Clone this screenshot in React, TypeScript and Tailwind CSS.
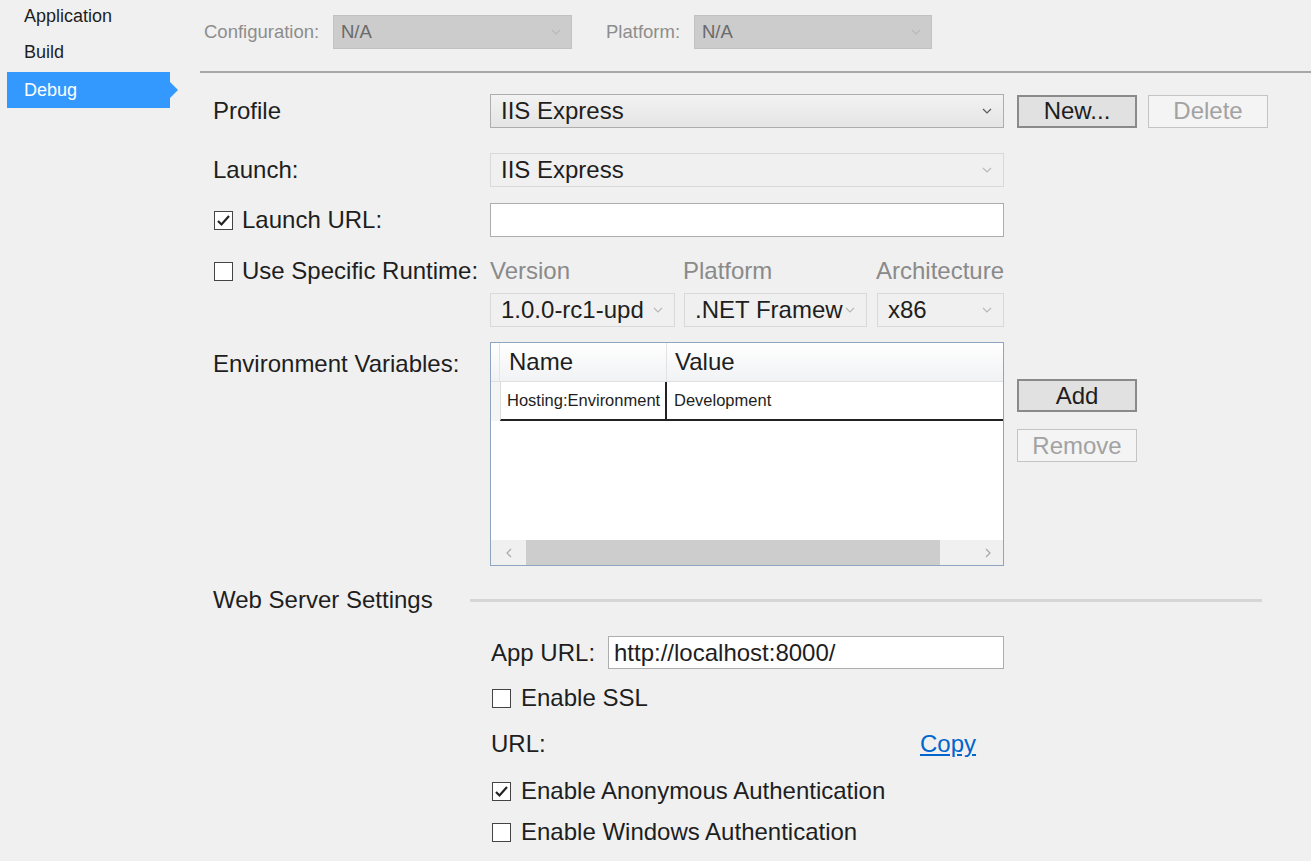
import React from "react";

const font = { fontFamily: '"Liberation Sans", Arial, sans-serif' };

function Chevron({ light }: { light?: boolean }) {
  return (
    <svg width="10" height="6" viewBox="0 0 10 6" className="shrink-0">
      <polyline
        points="1,1 5,5 9,1"
        fill="none"
        stroke={light ? "#b9b9b9" : "#5a5a5a"}
        strokeWidth="1.2"
      />
    </svg>
  );
}

function CheckBox({ checked }: { checked?: boolean }) {
  return (
    <div className="w-[19px] h-[19px] border border-[#444] bg-white flex items-center justify-center shrink-0">
      {checked && (
        <svg width="15" height="13" viewBox="0 0 15 13">
          <path d="M2 7 L5.5 10.5 L13 2" fill="none" stroke="#222" strokeWidth="2.2" />
        </svg>
      )}
    </div>
  );
}

function Select({
  value,
  width,
  disabled,
}: {
  value: string;
  width: string;
  disabled?: boolean;
}) {
  return (
    <div
      className={`${width} h-[34px] flex items-center justify-between pl-[10px] pr-[11px] border ${
        disabled
          ? "bg-[#f0f0f0] border-[#d9d9d9]"
          : "bg-gradient-to-b from-[#f2f2f2] to-[#e5e5e5] border-[#adadad]"
      }`}
    >
      <span className="text-[#1e1e1e] whitespace-nowrap overflow-hidden">{value}</span>
      <Chevron light={disabled} />
    </div>
  );
}

function Button({ label, disabled }: { label: string; disabled?: boolean }) {
  return (
    <div
      className={`w-[120px] h-[33px] flex items-center justify-center ${
        disabled
          ? "border border-[#c4c4c4] bg-[#f4f4f4] text-[#a2a2a2]"
          : "border-2 border-[#8a8a8a] bg-[#e1e1e1] text-[#1e1e1e]"
      }`}
    >
      {label}
    </div>
  );
}

function Sidebar() {
  return (
    <aside className="w-[200px] shrink-0 text-[18px] text-[#1e1e1e]">
      <div className="h-[32px] flex items-center pl-[24px]">Application</div>
      <div className="h-[40px] flex items-center pl-[24px]">Build</div>
      <div
        className="ml-[7px] w-[171px] h-[36px] flex items-center pl-[17px] bg-[#3399ff] text-white"
        style={{
          clipPath:
            "polygon(0 0, 163px 0, 163px 10px, 171px 18px, 163px 26px, 163px 36px, 0 36px)",
        }}
      >
        Debug
      </div>
    </aside>
  );
}

function Toolbar() {
  return (
    <div className="h-[73px] border-b-2 border-[#a7a7a7] flex items-start pt-[15px] text-[18.5px] text-[#8d8d8d]">
      <span className="ml-[4px] w-[129px] h-[34px] flex items-center">Configuration:</span>
      <div className="w-[239px] h-[34px] bg-[#cccccc] border border-[#c2c2c2] flex items-center justify-between pl-[7px] pr-[10px] text-[#6a6a6a]">
        N/A
        <Chevron light />
      </div>
      <span className="ml-[34px] w-[88px] h-[34px] flex items-center">Platform:</span>
      <div className="w-[238px] h-[34px] bg-[#cccccc] border border-[#c2c2c2] flex items-center justify-between pl-[7px] pr-[10px] text-[#6a6a6a]">
        N/A
        <Chevron light />
      </div>
    </div>
  );
}

function EnvGrid() {
  return (
    <div className="w-[514px] h-[224px] border border-[#8ea4bf] bg-white flex flex-col">
      <div className="flex h-[39px] bg-gradient-to-b from-white to-[#f1f2f4] border-b border-[#e0e0e0]">
        <div className="w-[9px] border-r border-[#e4e4e4]" />
        <div className="w-[167px] pl-[9px] flex items-center border-r border-[#e2e2e2]">Name</div>
        <div className="flex-1 pl-[8px] flex items-center">Value</div>
      </div>
      <div className="flex h-[39px] text-[16.5px]">
        <div className="w-[9px] bg-[#f5f5f5]" />
        <div className="flex flex-1 border-b-2 border-[#222] border-l border-l-[#dcdcdc]">
          <div className="w-[166px] pl-[6px] flex items-center border-r-2 border-[#222] whitespace-nowrap">
            Hosting:Environment
          </div>
          <div className="flex-1 pl-[7px] flex items-center">Development</div>
        </div>
      </div>
      <div className="flex-1" />
      <div className="h-[25px] bg-[#f0f0f0] flex items-center">
        <div className="w-[35px] flex items-center justify-center">
          <svg width="6" height="10" viewBox="0 0 6 10">
            <polyline points="5,1 1,5 5,9" fill="none" stroke="#a6a6a6" strokeWidth="1.2" />
          </svg>
        </div>
        <div className="w-[414px] h-[25px] bg-[#cdcdcd]" />
        <div className="flex-1 flex items-center justify-center pl-[32px]">
          <svg width="6" height="10" viewBox="0 0 6 10">
            <polyline points="1,1 5,5 1,9" fill="none" stroke="#a6a6a6" strokeWidth="1.2" />
          </svg>
        </div>
      </div>
    </div>
  );
}

export default function App() {
  return (
    <div className="flex w-full min-h-screen bg-[#f0f0f0] text-[#1e1e1e]" style={font}>
      <Sidebar />
      <main className="flex-1">
        <Toolbar />
        <div className="pl-[13px] text-[24px] flex flex-col">
          <div className="mt-[21px] h-[34px] flex items-center">
            <div className="w-[277px]">Profile</div>
            <Select value="IIS Express" width="w-[514px]" />
            <div className="ml-[13px]">
              <Button label="New..." />
            </div>
            <div className="ml-[11px]">
              <Button label="Delete" disabled />
            </div>
          </div>

          <div className="mt-[25px] h-[34px] flex items-center">
            <div className="w-[277px]">Launch:</div>
            <Select value="IIS Express" width="w-[514px]" disabled />
          </div>

          <div className="mt-[16px] h-[34px] flex items-center">
            <div className="w-[277px] flex items-center gap-[9px] pl-[1px]">
              <CheckBox checked />
              <span>Launch URL:</span>
            </div>
            <div className="w-[514px] h-[34px] bg-white border border-[#adadad]" />
          </div>

          <div className="mt-[20px] h-[28px] flex items-center">
            <div className="w-[277px] flex items-center gap-[9px] pl-[1px]">
              <CheckBox />
              <span className="whitespace-nowrap">Use Specific Runtime:</span>
            </div>
            <div className="flex text-[#8a8a8a]">
              <span className="w-[193px]">Version</span>
              <span className="w-[193px]">Platform</span>
              <span>Architecture</span>
            </div>
          </div>

          <div className="mt-[8px] h-[34px] flex items-center">
            <div className="w-[277px]" />
            <Select value="1.0.0-rc1-upd" width="w-[185px]" disabled />
            <div className="ml-[9px]">
              <Select value=".NET Framew" width="w-[183px]" disabled />
            </div>
            <div className="ml-[10px]">
              <Select value="x86" width="w-[127px]" disabled />
            </div>
          </div>

          <div className="mt-[15px] flex items-start">
            <div className="w-[277px] pt-[4px]">Environment Variables:</div>
            <EnvGrid />
            <div className="ml-[13px] mt-[37px] flex flex-col gap-[17px]">
              <Button label="Add" />
              <Button label="Remove" disabled />
            </div>
          </div>

          <div className="mt-[20px] h-[28px] flex items-center">
            <span className="w-[257px] whitespace-nowrap">Web Server Settings</span>
            <div className="w-[792px] h-[3px] bg-[#d6d6d6]" />
          </div>

          <div className="mt-[22px] h-[33px] flex items-center pl-[278px]">
            <span className="w-[117px]">App URL:</span>
            <div className="w-[396px] h-[33px] bg-white border border-[#adadad] flex items-center pl-[5px]">
              http://localhost:8000/
            </div>
          </div>

          <div className="mt-[15px] h-[28px] flex items-center gap-[10px] pl-[279px]">
            <CheckBox />
            <span>Enable SSL</span>
          </div>

          <div className="mt-[18px] h-[28px] flex items-center pl-[278px]">
            <span className="w-[429px]">URL:</span>
            <span className="text-[#0066cc] underline">Copy</span>
          </div>

          <div className="mt-[19px] h-[28px] flex items-center gap-[10px] pl-[279px]">
            <CheckBox checked />
            <span>Enable Anonymous Authentication</span>
          </div>

          <div className="mt-[13px] h-[28px] flex items-center gap-[10px] pl-[279px]">
            <CheckBox />
            <span>Enable Windows Authentication</span>
          </div>
        </div>
      </main>
    </div>
  );
}
